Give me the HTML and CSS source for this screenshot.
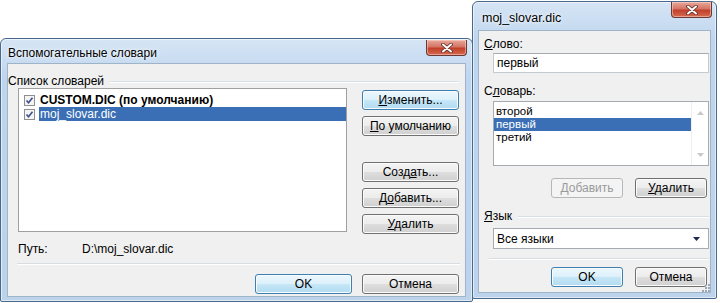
FILE: index.html
```html
<!DOCTYPE html>
<html lang="ru">
<head>
  <meta charset="UTF-8">
  <title>Словари</title>
  <link rel="stylesheet" href="styles.css">
</head>
<body>
  <div class="desk">

    <!-- левое окно -->
    <div class="window win-dicts">
      <div class="titlebar">
        <span class="title">Вспомогательные словари</span>
        <span class="close">
          <svg width="14" height="10" viewBox="0 0 14 10"><path d="M3 1.5 L11 8.5 M11 1.5 L3 8.5" stroke="#5a2a24" stroke-width="3.6" stroke-linecap="round"/><path d="M3 1.5 L11 8.5 M11 1.5 L3 8.5" stroke="#fff" stroke-width="2" stroke-linecap="round"/></svg>
        </span>
      </div>
      <div class="client client-dicts">
        <div class="group-head"><span>Список словарей</span><i class="line"></i></div>
        <div class="dict-body">
          <div class="listbox dict-list">
            <div class="check-row">
              <span class="cb"><svg width="11" height="11" viewBox="0 0 11 11"><rect x="0.5" y="0.5" width="10" height="10" fill="#f4f4f4" stroke="#8e8f8f"/><path d="M2.5 5.5 L4.5 7.8 L8.5 2.8" fill="none" stroke="#3b4f8c" stroke-width="1.6"/></svg></span>
              <span class="bold">CUSTOM.DIC (по умолчанию)</span>
            </div>
            <div class="check-row">
              <span class="cb"><svg width="11" height="11" viewBox="0 0 11 11"><rect x="0.5" y="0.5" width="10" height="10" fill="#f4f4f4" stroke="#8e8f8f"/><path d="M2.5 5.5 L4.5 7.8 L8.5 2.8" fill="none" stroke="#3b4f8c" stroke-width="1.6"/></svg></span>
              <span class="sel">moj_slovar.dic</span>
            </div>
          </div>
          <div class="side-buttons">
            <div class="btn default"><u>И</u>зменить...</div>
            <div class="btn gap-s"><u>П</u>о умолчанию</div>
            <div class="btn gap-l">Созд<u>а</u>ть...</div>
            <div class="btn gap-s">Д<u>о</u>бавить...</div>
            <div class="btn gap-s"><u>У</u>далить</div>
          </div>
        </div>
        <div class="path-row">
          <span class="path-label">Путь:</span>
          <span>D:\moj_slovar.dic</span>
        </div>
        <div class="sep sep-left"></div>
        <div class="footer footer-left">
          <div class="btn wide default">OK</div>
          <div class="btn wide">Отмена</div>
        </div>
      </div>
    </div>

    <!-- правое окно -->
    <div class="window win-word">
      <div class="titlebar">
        <span class="title">moj_slovar.dic</span>
        <span class="close">
          <svg width="14" height="10" viewBox="0 0 14 10"><path d="M3 1.5 L11 8.5 M11 1.5 L3 8.5" stroke="#5a2a24" stroke-width="3.6" stroke-linecap="round"/><path d="M3 1.5 L11 8.5 M11 1.5 L3 8.5" stroke="#fff" stroke-width="2" stroke-linecap="round"/></svg>
        </span>
      </div>
      <div class="client client-word">
        <div class="label first"><u>С</u>лово:</div>
        <div class="field input">первый</div>
        <div class="label">С<u>л</u>оварь:</div>
        <div class="field listbox word-list">
          <div class="items">
            <div class="item">второй</div>
            <div class="item sel">первый</div>
            <div class="item">третий</div>
          </div>
          <div class="scroll">
            <svg width="7" height="4" viewBox="0 0 7 4"><path d="M0 4 L3.5 0 L7 4 Z" fill="#c8c8c8"/></svg>
            <svg width="7" height="4" viewBox="0 0 7 4"><path d="M0 0 L3.5 4 L7 0 Z" fill="#c8c8c8"/></svg>
          </div>
        </div>
        <div class="row-buttons">
          <div class="btn small disabled">Добавить</div>
          <div class="btn small"><u>У</u>далить</div>
        </div>
        <div class="group-head lang-head"><span><u>Я</u>зык</span><i class="line"></i></div>
        <div class="field combo">
          <span>Все языки</span>
          <svg width="7" height="4" viewBox="0 0 7 4"><path d="M0 0 L7 0 L3.5 4 Z" fill="#1c2a52"/></svg>
        </div>
        <div class="sep sep-right"></div>
        <div class="footer footer-right">
          <div class="btn small default">OK</div>
          <div class="btn small">Отмена</div>
        </div>
        <svg class="grip" width="10" height="10" viewBox="0 0 10 10">
          <rect x="8" y="2" width="2" height="2" fill="#9aa7b8"/>
          <rect x="5" y="5" width="2" height="2" fill="#9aa7b8"/>
          <rect x="8" y="5" width="2" height="2" fill="#9aa7b8"/>
          <rect x="2" y="8" width="2" height="2" fill="#9aa7b8"/>
          <rect x="5" y="8" width="2" height="2" fill="#9aa7b8"/>
          <rect x="8" y="8" width="2" height="2" fill="#9aa7b8"/>
        </svg>
      </div>
    </div>

  </div>
</body>
</html>
```

FILE: styles.css
```css
body {
  margin: 0;
  background: #fff;
  font-family: "Liberation Sans", Arial, sans-serif;
  font-size: 12px;
  color: #000;
}

.desk {
  position: relative;
  width: 720px;
  height: 303px;
  overflow: hidden;
}

/* окна на "рабочем столе" */
.window {
  position: absolute;
  box-sizing: border-box;
  display: flex;
  flex-direction: column;
  border: 1px solid #48698b;
  border-radius: 6px 6px 2px 2px;
  background: linear-gradient(#d6e5f5, #bed5ee 40px, #bcd3eb);
  box-shadow: inset 0 0 0 1px rgba(255, 255, 255, 0.55);
}
.win-dicts {
  left: 0;
  top: 38px;
  width: 473px;
  height: 264px;
  padding: 0 6px 4px 6px;
}
.win-word {
  left: 472px;
  top: 1px;
  width: 245px;
  height: 298px;
  padding: 0 5px 5px 5px;
}

.titlebar {
  position: relative;
  display: flex;
  align-items: center;
  flex: none;
}
.win-dicts .titlebar {
  height: 24px;
}
.win-word .titlebar {
  height: 28px;
}
.title {
  font-size: 12px;
  text-shadow: 0 0 6px #eef5fc, 0 0 3px #fff;
}
.win-dicts .title {
  margin-left: 1px;
  margin-top: 4px;
}
.win-word .title {
  margin-left: 4px;
  margin-top: 3px;
  font-size: 12.5px;
}

.close {
  position: absolute;
  top: 0;
  right: -1px;
  width: 41px;
  height: 16px;
  box-sizing: border-box;
  display: flex;
  align-items: center;
  justify-content: center;
  border: 1px solid #6a3a36;
  border-top: none;
  border-radius: 0 0 4px 4px;
  background: linear-gradient(#e9a99c, #d47564 45%, #c2402c 55%, #d66a4f);
  box-shadow: inset 0 0 0 1px rgba(255, 220, 210, 0.5);
}
.win-dicts .close {
  top: 1px;
}

.client {
  position: relative;
  flex: 1;
  box-sizing: border-box;
  background: #f0f0f0;
  border: 1px solid #9fb3c9;
}

/* левое окно */
.client-dicts {
  padding: 0 6px 0 0;
}
.group-head {
  display: flex;
  align-items: center;
  height: 14px;
  line-height: 14px;
}
.group-head .line {
  flex: 1;
  margin-left: 6px;
  margin-top: 1px;
  border-top: 1px solid #d5dfe5;
  border-bottom: 1px solid #fff;
}
.client-dicts .group-head {
  margin-top: 10px;
}

.dict-body {
  display: flex;
  gap: 15px;
  padding-left: 10px;
}
.listbox {
  box-sizing: border-box;
  background: #fff;
  border: 1px solid #a0a0a0;
}
.dict-list {
  width: 329px;
  height: 144px;
  padding: 4px 0 0 5px;
}
.check-row {
  display: flex;
  align-items: center;
  height: 14px;
  line-height: 14px;
}
.cb {
  display: flex;
  width: 15px;
}
.bold {
  font-weight: bold;
  padding-left: 1px;
}
.check-row .sel {
  flex: 1;
  padding-left: 1px;
  background: #3a6fb5;
  color: #fff;
  height: 14px;
}

.side-buttons {
  display: flex;
  flex-direction: column;
  margin-top: 2px;
}
.btn {
  box-sizing: border-box;
  width: 97px;
  height: 20px;
  line-height: 18px;
  text-align: center;
  border: 1px solid #707070;
  border-radius: 3px;
  background: linear-gradient(#f4f4f4, #ececec 50%, #dedede 50%, #d0d0d0);
  box-shadow: inset 0 0 0 1px #fbfbfb;
  font-size: 12px;
}
.btn.default {
  border-color: #3c7fb1;
  background: linear-gradient(#ecf7fd, #dcf0fb 50%, #c6e7f7 50%, #b2dbf1);
}
.btn.disabled {
  border-color: #b5b8bb;
  background: #f4f4f4;
  color: #9a9a9a;
  box-shadow: none;
}
.gap-s {
  margin-top: 6px;
}
.gap-l {
  margin-top: 26px;
}

.path-row {
  display: flex;
  margin-top: 8px;
  padding-left: 10px;
  height: 14px;
  line-height: 14px;
}
.path-label {
  width: 64px;
}

.sep {
  border-top: 1px solid #d8dde2;
  border-bottom: 1px solid #fff;
}
.sep-left {
  margin: 7px -1px 0 9px;
}

.footer {
  display: flex;
  justify-content: flex-end;
}
.footer-left {
  gap: 10px;
  margin-top: 9px;
}

/* правое окно */
.client-word {
  padding: 0 1px 0 5px;
  display: flex;
  flex-direction: column;
}
.label {
  height: 14px;
  line-height: 14px;
  margin-top: 11px;
}
.label.first {
  margin-top: 6px;
}
.field {
  box-sizing: border-box;
  margin-left: 9px;
  background: #fff;
}
.input {
  height: 20px;
  margin-top: 2px;
  line-height: 18px;
  padding-left: 3px;
  border: 1px solid #c4cad2;
  border-top-color: #a6abb3;
}
.word-list {
  height: 65px;
  margin-top: 3px;
  display: flex;
  border-color: #a6abb3;
}
.items {
  flex: 1;
  padding-top: 3px;
}
.item {
  height: 13px;
  line-height: 13px;
  font-size: 11.5px;
  padding-left: 2px;
}
.items .sel {
  background: #3a6fb5;
  color: #fff;
}
.scroll {
  width: 16px;
  display: flex;
  flex-direction: column;
  align-items: center;
  justify-content: space-between;
  padding: 9px 0 8px;
  border-left: 1px solid #eeeeee;
}

.row-buttons {
  display: flex;
  justify-content: flex-end;
  gap: 12px;
  margin: 12px 2px 0 0;
}
.btn.small {
  width: 72px;
}

.lang-head {
  margin-top: 11px;
}
.combo {
  height: 21px;
  margin-top: 5px;
  display: flex;
  align-items: center;
  justify-content: space-between;
  padding: 0 8px 0 3px;
  border: 1px solid #a6abb3;
}

.sep-right {
  margin: 9px 0 0 5px;
}
.footer-right {
  gap: 12px;
  margin: 7px 2px 0 0;
}
.grip {
  position: absolute;
  right: 0;
  bottom: 0;
}
```
